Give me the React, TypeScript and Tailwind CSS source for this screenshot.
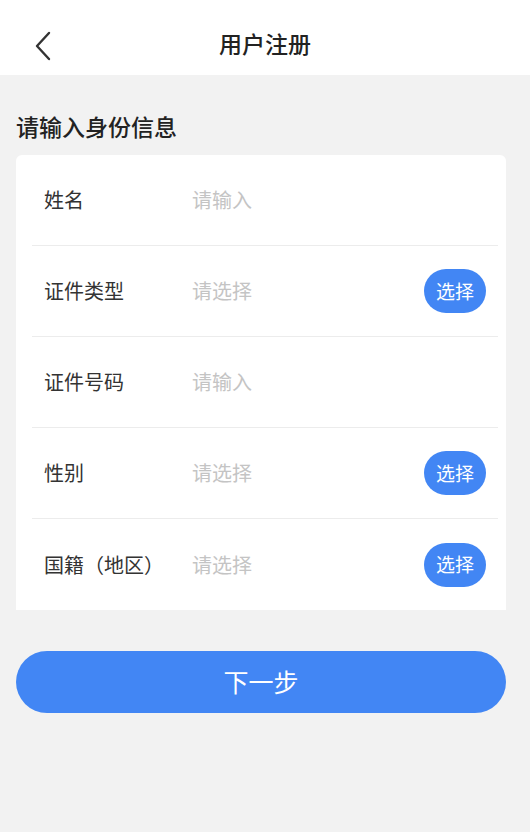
const font = { fontFamily: '"Noto Sans CJK SC", "Noto Sans", sans-serif' };

type Row = { label: string; placeholder: string; select?: boolean };

const rows: Row[] = [
  { label: "姓名", placeholder: "请输入" },
  { label: "证件类型", placeholder: "请选择", select: true },
  { label: "证件号码", placeholder: "请输入" },
  { label: "性别", placeholder: "请选择", select: true },
  { label: "国籍（地区）", placeholder: "请选择", select: true },
];

export default function App() {
  return (
    <div className="min-h-[832px] w-[530px] bg-[#f2f2f2]" style={font}>
      <header className="relative flex h-[75px] items-center justify-center bg-white pt-[12px]">
        <button className="absolute left-[30px] top-[27px] p-1">
          <svg width="18" height="30" viewBox="0 0 18 30" fill="none">
            <path d="M15 2 L3 15 L15 28" stroke="#333" strokeWidth="2.4" strokeLinecap="round" strokeLinejoin="round" />
          </svg>
        </button>
        <h1 className="text-[23px] font-medium text-[#222]">用户注册</h1>
      </header>

      <div className="pl-4 pr-6">
        <h2 className="pt-[34px] pb-[12px] text-[23px] font-medium leading-[34px] text-[#222]">请输入身份信息</h2>

        <div className="overflow-hidden rounded-t-[6px] bg-white">
          {rows.map((r, i) => (
            <div key={r.label} className="pl-4 pr-2">
              <div
                className={`flex h-[91px] items-center ${i < rows.length - 1 ? "border-b border-[#ececec]" : ""}`}
              >
                <span className="w-[160px] pl-3 text-[20px] text-[#333]">{r.label}</span>
                <span className="flex-1 text-[20px] text-[#c4c4c4]">{r.placeholder}</span>
                {r.select && (
                  <span className="mr-[12px] flex h-[44px] w-[62px] items-center justify-center rounded-full bg-[#4286f4] text-[19px] text-white">
                    选择
                  </span>
                )}
              </div>
            </div>
          ))}
        </div>

        <button className="mt-[41px] flex h-[62px] w-full items-center justify-center rounded-full bg-[#4286f4] text-[25px] text-white">
          下一步
        </button>
      </div>
    </div>
  );
}
